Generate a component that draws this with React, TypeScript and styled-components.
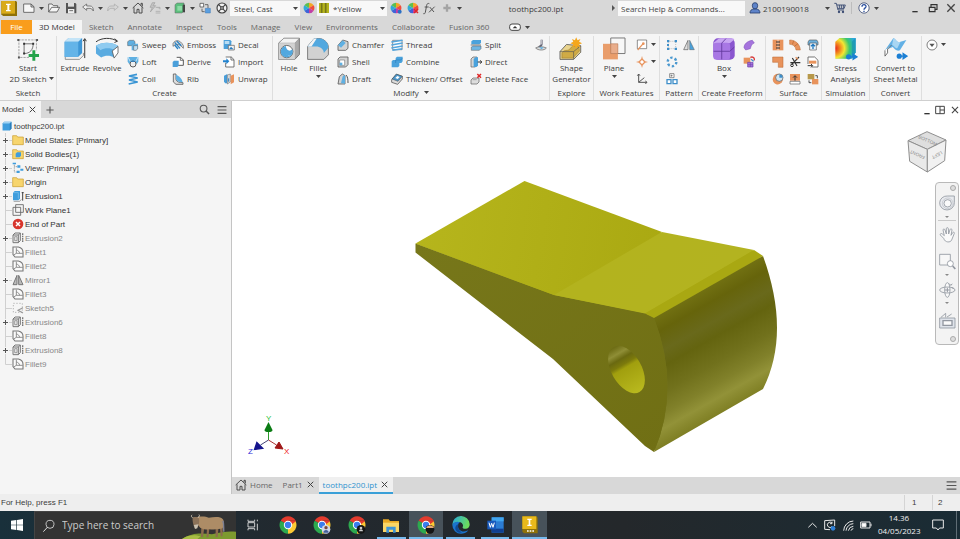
import React from "react";
import styled, { createGlobalStyle, css } from "styled-components";

const UI = `"Open Sans", "Noto Sans", sans-serif`;
const PLAIN = `"Liberation Sans", Arial, sans-serif`;
const BLUE = "#5fb0e2";
const INK = "#5b5b5b";
const ORANGE = "#e8935c";

const Global = createGlobalStyle`
  * { box-sizing: border-box; }
  html, body, #root { height: 100%; margin: 0; }
  body { font: 8px/11px ${UI}; color: #3c3c3c; background: #fff; overflow: hidden; }
  button, input, select { font: inherit; color: inherit; }
  button { background: none; border: 0; padding: 0; margin: 0; white-space: nowrap; }
  svg { display: block; flex: none; }
  ul { list-style: none; margin: 0; padding: 0; }
`;

const Shell = styled.div`
  height: 100vh;
  display: flex;
  flex-direction: column;
`;

/* ---------- icons ---------- */

const small: Record<string, React.ReactNode> = {
  sweep: (<><path d="M2 8l6-4h12l4 4v8h-8v4H2z" fill={BLUE} stroke={INK} strokeWidth="1.5" /><path d="M14 18l6-4h13v13l-6 7H14z" fill={BLUE} /><path d="M20 20h12v10l-5 4h-7z" fill="#bfe0f5" stroke={INK} strokeWidth="1.5" /></>),
  loft: (<><path d="M2 3h32v14l-4 6H6l-4-6z" fill={BLUE} /><path d="M3 3l7 14M33 3l-7 14" stroke="#fff" strokeWidth="2" /><circle cx="18" cy="24" r="9" fill="#eee" stroke={INK} strokeWidth="3" /><path d="M10 18a10 8 0 0 1 16 0z" fill="#2b7dc0" /></>),
  coil: (<path d="M30 4L6 9l26 6L6 21l26 6-27 6" fill="none" stroke="#3a95d4" strokeWidth="5" />),
  emboss: (<><path d="M3 14C8 2 24 0 34 20v8C24 16 14 12 3 22z" fill="#ddd" stroke={INK} strokeWidth="2" /><path d="M8 10l16 18M14 6l14 14M8 18l10 12" stroke="#2b83c4" strokeWidth="4" /></>),
  derive: (<><path d="M14 4h12l8 8v16H18" fill="#fff" stroke={INK} strokeWidth="3" /><path d="M25 4v9h9" fill="none" stroke={INK} strokeWidth="2.5" /><path d="M2 18l4-4h14v15l-4 4H2z" fill="#4a9fda" /></>),
  rib: (<><path d="M4 3h8v16c2 8 10 10 21 10v5H12L4 27z" fill="#ddd" stroke={INK} strokeWidth="2.5" /><path d="M12 6c10 2 18 12 20 22-12 0-18-4-20-10z" fill={BLUE} /></>),
  decal: (<><path d="M2 3h20l3 4v19l-4 4H2z" fill="#4a9fda" /><path d="M5 6h14v9H5z" fill="#b8dcf3" /><path d="M16 19h18v14H16z" fill="#f4f4f4" stroke={INK} strokeWidth="2" /><path d="M18 31l6-8 8 8z" fill="#2b7dc0" /></>),
  import: (<><path d="M8 3h17l8 8v22H8V20" fill="#fff" stroke={INK} strokeWidth="2.5" /><path d="M24 3v9h9" fill="none" stroke={INK} strokeWidth="2.5" /><path d="M0 13h10V7l9 9-9 9v-6H0z" fill="#2484cf" /></>),
  unwrap: (<><path d="M3 8l10-5v28H6l-3-6z" fill="#4a9fda" /><path d="M13 6l9-3v24l-9 6z" fill="#d9d9d9" stroke={INK} strokeWidth="1.5" /><path d="M23 8l10-4v24l-10 6z" fill={ORANGE} /><path d="M17 16v10" stroke="#2b7dc0" strokeWidth="3" /></>),
  chamfer: (<><path d="M3 19L17 3l16 5v20l-7 6H3z" fill="#d3d3d3" stroke={INK} strokeWidth="2.5" /><path d="M3 19L17 4l9 8L12 26z" fill={BLUE} /></>),
  shell: (<><path d="M3 9l6-6h24v23l-7 7H3z" fill="#d3d3d3" stroke={INK} strokeWidth="2.5" /><path d="M8 12h15v16H8z" fill="#fff" stroke={INK} strokeWidth="1.5" /><path d="M8 20h8v8H8z" fill={BLUE} /></>),
  draft: (<><path d="M3 33L7 11l9-8 8 5v25z" fill="#d3d3d3" stroke={INK} strokeWidth="2.5" /><path d="M12 30l5-20 7-4v26z" fill={BLUE} /><path d="M27 6c5 5 6 13 6 24" fill="none" stroke="#333" strokeWidth="2.5" /></>),
  thread: (<><path d="M5 4h28v28H5z" fill="#fff" stroke={INK} strokeWidth="2" /><path d="M1 9l34-5M1 18l34-6M1 27l34-6M4 34l30-5" stroke="#55a6dd" strokeWidth="4.5" /></>),
  combine: (<><path d="M2 16l4-4h8V6l4-4h17v14l-4 5h-6v9l-4 4H2z" fill="#4aa2dc" /><path d="M14 12h16l4-6M14 12v9" stroke="#2475b5" strokeWidth="1.5" fill="none" /></>),
  thicken: (<><path d="M2 20L16 4l18 6v8L20 34 2 28z" fill="#ddd" stroke={INK} strokeWidth="2.5" /><path d="M3 18L16 3l18 7-13 15z" fill="#4c95c8" stroke="#444" strokeWidth="1.5" /><path d="M13 15l6-6 7 3-6 6z" fill="#fff" /></>),
  split: (<><path d="M4 7l5-4h24v9l-5 4H4z" fill="#4aa2dc" /><path d="M2 18h31" stroke="#444" strokeWidth="2" /><path d="M4 24l5-3h24v8l-5 5H4z" fill="#6fb6e3" stroke={INK} strokeWidth="1.5" /></>),
  direct: (<><path d="M3 9l6-6h12v25l-5 5H3z" fill="#d5d5d5" stroke={INK} strokeWidth="2" /><path d="M11 9l5-5h8v25l-5 4h-8z" fill="#4aa2dc" /><path d="M23 18h12M31 13l4 5-4 5" stroke="#333" strokeWidth="3" fill="none" /></>),
  deleteFace: (<><path d="M3 21l6-6h18v12l-6 6H3z" fill="#ddd" stroke={INK} strokeWidth="2" /><path d="M8 20h12" stroke="#888" strokeWidth="2" /><path d="M22 3l11 11M33 3L22 14" stroke="#e02828" strokeWidth="4.5" /></>),
  finish: (<><path d="M20 2v14c0 6-8 5-8 10" fill="none" stroke="#667" strokeWidth="6" /><path d="M20 3v13" stroke="#fff" strokeWidth="2" /><path d="M2 27c6-5 24-5 32 0-6 8-24 8-32 0z" fill="#ddd" stroke={INK} strokeWidth="2" /><path d="M12 25h14l-6 6z" fill={BLUE} /></>),
  axis: (<><path d="M4 3h28v26H4z" fill="#fff" stroke={INK} strokeWidth="2" /><path d="M5 33l17-20" stroke={ORANGE} strokeWidth="3.5" /><circle cx="22" cy="14" r="4" fill={ORANGE} /></>),
  point: (<><path d="M18 2v32M2 18h32" stroke={ORANGE} strokeWidth="2.5" /><path d="M18 9l9 9-9 9-9-9z" fill="#fff" stroke={ORANGE} strokeWidth="4" /></>),
  ucs: (<path d="M8 3v25h25M8 28L25 14M4 8l4-5 4 5M28 24l5 4-5 5" fill="none" stroke="#555" strokeWidth="3" />),
  rect: (<><path d="M7 7h22v22H7z" fill="none" stroke="#888" strokeWidth="1.5" strokeDasharray="3 3" /><path d="M3 3h7v7H3zM26 3h7v7h-7zM3 26h7v7H3zM26 26h7v7h-7zM3 15h6v6H3z" fill="#3f8fc9" /></>),
  mirror: (<><path d="M15 4v28H2z" fill="#ddd" stroke={INK} strokeWidth="2" /><path d="M20 4v28h14z" fill="#4aa2dc" stroke={INK} strokeWidth="1.5" /></>),
  circ: (<circle cx="18" cy="18" r="13" fill="none" stroke="#4a98cf" strokeWidth="7" strokeDasharray="7 6.6" />),
  sketchPat: (<><path d="M11 2h13v12H11zM16 5v6M14 8h6" fill="#fff" stroke={INK} strokeWidth="2" /><path d="M3 20h12v12H3zM21 20h12v12H21z" fill="#fff" stroke="#3f8fc9" strokeWidth="4" /></>),
  face: (<path d="M3 26C3 16 12 6 28 4l6 8c-8 2-10 10-12 17L8 33z" fill="#a574dd" stroke="#7d4fb6" strokeWidth="1.5" />),
  convert: (<><path d="M2 5h20v18H2z" fill={ORANGE} /><path d="M14 19h16v14H14z" fill="#a574dd" stroke="#6a3fa8" strokeWidth="2" /><path d="M22 19v14M14 26h16" stroke="#6a3fa8" strokeWidth="1.5" /><path d="M22 4c8-3 13 2 12 9" fill="none" stroke="#d63c3c" strokeWidth="4" /><path d="M24 10l8 6" stroke="#3f8fc9" strokeWidth="4" /></>),
  stitch: (<><path d="M2 2h32v32H2z" fill={ORANGE} /><path d="M18 2v32" stroke="#fff" strokeWidth="2" /><path d="M12 9h12M12 18h12M12 27h12" stroke="#333" strokeWidth="3" /></>),
  ruled: (<><path d="M2 3c18 0 31 13 32 30H21C20 22 12 16 2 16z" fill={ORANGE} stroke="#b8662f" strokeWidth="1.5" /><path d="M14 5l-4 12M27 14L16 22" stroke="#b8662f" strokeWidth="2" /></>),
  replace: (<><path d="M3 9l4-6h22l4 6v9H3z" fill="#6bb1de" stroke={INK} strokeWidth="2" /><path d="M8 12h20v21H8z" fill="#eaf4fb" stroke={INK} strokeWidth="2" /><path d="M18 30V17M12 22l6-6 6 6" fill="none" stroke="#2178bd" strokeWidth="4" /></>),
  patch: (<path d="M2 3h31v31H19V19H2z" fill={ORANGE} stroke="#b8662f" strokeWidth="1.5" />),
  trim: (<><path d="M30 3L8 26M34 20H4M10 6l14 24" stroke="#333" strokeWidth="3.5" /><circle cx="9" cy="28" r="4" fill="none" stroke="#333" strokeWidth="3" /><path d="M20 4l6 6" stroke={ORANGE} strokeWidth="4" /></>),
  extend: (<><path d="M3 24V3h20l10 10v20H14" fill="#fff" stroke={INK} strokeWidth="2.5" /><path d="M6 14h22v9H6z" fill={ORANGE} /><path d="M2 29h14M12 24l5 5-5 5" stroke="#333" strokeWidth="3" fill="none" /></>),
  sculpt: (<><path d="M3 15A14 14 0 1 0 31 24l-6-8z" fill={ORANGE} /><circle cx="18" cy="17" r="15" fill={ORANGE} /><circle cx="22" cy="14" r="11" fill="#cfe6f5" stroke={INK} strokeWidth="2" /><path d="M22 14V4a10 10 0 0 1 10 10z" fill="#3f8fc9" /></>),
  thickSurf: (<><path d="M3 3h30v20H3z" fill={ORANGE} /><path d="M3 25h30v8H3z" fill="#fff" stroke={INK} strokeWidth="2" /><path d="M18 23V9M12 14l6-6 6 6" stroke="#333" strokeWidth="3" fill="none" /></>),
  copyObj: (<><path d="M2 3h20v16H2z" fill="#b7984a" /><path d="M15 18h19v16H15z" fill={ORANGE} /><path d="M25 8h6v8M6 22v7h7" stroke="#333" strokeWidth="2.5" fill="none" /></>),
  /* quick access */
  newDoc: (<path d="M2 6h22l9 8v17H2zM24 6v9h9" fill="#f7f7f7" stroke="#555" strokeWidth="2.5" />),
  open: (<path d="M2 30V6h10l4 5h13v6M2 30l9-14h24l-8 14z" fill="#f4f4f4" stroke="#555" strokeWidth="2.5" />),
  save: (<><path d="M3 3h28l3 3v28H3z" fill="#555" /><path d="M9 3h18v11H9z" fill="#ddd" /><path d="M9 21h19v13H9z" fill="#eee" /><path d="M13 26h11" stroke="#555" strokeWidth="2.5" /></>),
  undo: (<path d="M2 15L14 6v6h10c7 0 10 5 10 15-3-5-6-8-10-8H14v6z" fill="#f0f0f0" stroke="#666" strokeWidth="2.5" />),
  redo: (<path d="M34 15L22 6v6H12C5 12 2 17 2 27c3-5 6-8 10-8h10v6z" fill="#d6d6d6" stroke="#b0b0b0" strokeWidth="2.5" />),
  home: (<path d="M2 18L18 3l16 15M6 16v17h9V22h6v11h9V16M27 10V4h4v9" fill="none" stroke="#444" strokeWidth="2.8" />),
  bolt: (<path d="M10 2L3 16h7L4 30 20 11h-8l6-9zM20 16h13v6M20 28h14M20 33h14" fill="#c4c4c4" stroke="#a0a0a0" strokeWidth="2" />),
  material: (<><path d="M3 8l6-5h21v24l-6 6H3z" fill="#5cbf7d" stroke="#666" strokeWidth="1.5" /><path d="M10 12h14v14H10z" fill="#8edba6" /><path d="M26 8h7v23h-7z" fill="#444" /></>),
  link: (<><path d="M3 4h11v11H3z" fill="#fff" stroke="#555" strokeWidth="2.5" /><path d="M18 8h9v10M9 20v9h8" fill="none" stroke="#555" strokeWidth="2.5" /><path d="M19 19h15v14H19z" fill="#5a9fe0" stroke="#3d74b0" strokeWidth="1.5" /></>),
  steering: (<><circle cx="18" cy="18" r="15" fill="#f0f0f0" stroke="#444" strokeWidth="3.5" /><path d="M8 8l20 20M28 8L8 28" stroke="#444" strokeWidth="3.5" /><circle cx="18" cy="18" r="5" fill="#888" stroke="#444" strokeWidth="2" /></>),
  wheel: (<><path d="M18 18V2a16 16 0 0 1 14 8z" fill="#f5a623" /><path d="M18 18L32 10a16 16 0 0 1 0 16z" fill="#ef4b3c" /><path d="M18 18l14 8a16 16 0 0 1-14 8z" fill="#c23fa5" /><path d="M18 18v16A16 16 0 0 1 4 26z" fill="#3f63d8" /><path d="M18 18L4 26a16 16 0 0 1 0-16z" fill="#31a9d8" /><path d="M18 18L4 10A16 16 0 0 1 18 2z" fill="#5cbf4d" /></>),
  plus: (<path d="M18 7v22M7 18h22" stroke="#a3a3a3" strokeWidth="7" />),
  user: (<><path d="M10 10a8 8 0 0 1 16 0c0 7-3 11-8 11s-8-4-8-11z" fill="#5e83c9" stroke="#27406f" strokeWidth="2.5" /><path d="M3 33c0-8 5-11 10-12h10c5 1 10 4 10 12z" fill="#5e83c9" stroke="#27406f" strokeWidth="2.5" /></>),
  cart: (<><path d="M1 4h6l5 20h18M9 9h25l-4 11H12M16 9v10M22 9v10M28 9v10" fill="none" stroke="#3b4b72" strokeWidth="2.8" /><circle cx="15" cy="30" r="3.5" fill="#3b4b72" /><circle cx="27" cy="30" r="3.5" fill="#3b4b72" /></>),
  help: (<><circle cx="18" cy="18" r="15.5" fill="#fff" stroke="#3b4b72" strokeWidth="2.5" /><path d="M12 14c0-8 13-8 12 0-1 5-6 4-6 9M18 26v4" fill="none" stroke="#2a4f9e" strokeWidth="4" /></>),
  minimize: (<path d="M10 29h16" stroke="#333" strokeWidth="4" />),
  restore: (<path d="M7 16h17v13H7zM12 15V8h18v14h-6" fill="none" stroke="#333" strokeWidth="3.5" />),
  close: (<path d="M7 7l22 22M29 7L7 29" stroke="#444" strokeWidth="4" />),
  splitWin: (<path d="M5 7h26v22H5zM18 7v22M18 18h13" fill="none" stroke="#444" strokeWidth="3" />),
  add: (<path d="M18 5v26M5 18h26" stroke="#555" strokeWidth="4" />),
  search: (<><circle cx="15" cy="15" r="11" fill="none" stroke="#555" strokeWidth="3.5" /><path d="M23 23l10 10" stroke="#555" strokeWidth="5" /></>),
  menu: (<path d="M2 6h32M2 18h32M2 30h32" stroke="#555" strokeWidth="4" />),
  more: (<><circle cx="18" cy="18" r="15" fill="#fff" stroke="#666" strokeWidth="2.5" /><path d="M10 14h16l-8 10z" fill="#555" /></>),
  pill: (<><rect x="2" y="9" width="32" height="19" rx="7" fill="#fff" stroke="#444" strokeWidth="3" /><path d="M11 22h14l-7-7z" fill="#333" /></>),
  /* browser tree */
  part: (<><path d="M2 9l6-6h26v24l-6 7H2z" fill="#3f9ddd" /><path d="M2 9l6-6h26l-6 6z" fill="#9fd2f2" /><path d="M28 9l6-6v24l-6 7z" fill="#2b7dbb" /></>),
  folder: (<path d="M2 5h12l3 4h17v23H2z" fill="#f7d56d" stroke="#c79a2b" strokeWidth="2" />),
  folderPart: (<><path d="M2 5h12l3 4h17v23H2z" fill="#f7d56d" stroke="#c79a2b" strokeWidth="2" /><path d="M11 17l4-4h12v10l-4 5H11z" fill="#3f9ddd" /></>),
  view: (<><path d="M7 4v26h8M7 14h10" fill="none" stroke="#777" strokeWidth="2" strokeDasharray="3 2" /><path d="M2 2h10v5H2zM16 10h9v7h-9zM14 26h9v7h-9zM25 20h9v6h-9z" fill="#3f9ddd" /></>),
  extrude: (<><path d="M3 8l5-5h16v23l-5 5H3z" fill="#3f9ddd" /><path d="M3 8h16v18" stroke="#9fd2f2" strokeWidth="1.5" fill="none" /><path d="M5 34h18l5-6" stroke="#777" strokeWidth="2" fill="none" /><path d="M32 6v26M29 8h6" stroke="#444" strokeWidth="3" /></>),
  workPlane: (<path d="M11 2h23v23H11zM3 10h23v24H3z" fill="none" stroke="#666" strokeWidth="2.6" />),
  end: (<><circle cx="18" cy="18" r="16" fill="#d7352d" /><path d="M12 12l12 12M24 12L12 24" stroke="#fff" strokeWidth="4.5" /></>),
  extrudeOff: (<><path d="M3 9l6-6h16v23l-6 6H3zM3 9h16v23M19 9l6-6" fill="#eee" stroke="#777" strokeWidth="3" /><path d="M8 14h7v12H8z" fill="none" stroke="#777" strokeWidth="2" /><path d="M32 4v28" stroke="#777" strokeWidth="4" strokeDasharray="5 2" /></>),
  filletOff: (<><path d="M3 3h16c9 2 14 8 14 16v14H9l-6-7z" fill="#fafafa" stroke="#777" strokeWidth="3.2" /><path d="M13 5v17l-8 5M13 22h19M13 12c6 1 9 5 10 10" fill="none" stroke="#777" strokeWidth="2.4" /></>),
  mirrorOff: (<path d="M15 4v28H3zM20 4v28h13z" fill="#bbb" stroke="#777" strokeWidth="3" />),
  sketchOff: (<><path d="M4 4h27v27H4z" fill="none" stroke="#aaa" strokeWidth="2.5" strokeDasharray="4 5" /><path d="M33 17L18 25l15 8" fill="none" stroke="#999" strokeWidth="3.5" /></>),
};

const big: Record<string, React.ReactNode> = {
  sketch: (<><path d="M6 8h58M8 6v60M12 62h28M62 8v32" stroke="#777" strokeWidth="2" strokeDasharray="7 3" /><path d="M3 5h6v6H3zM61 5h6v6h-6zM5 59h6v6H5z" fill="#555" /><path d="M24 20h28c0 18-10 30-28 30z" fill="none" stroke="#555" strokeWidth="2.5" /><path d="M21 17h6v6h-6zM49 17h6v6h-6zM21 47h6v6h-6z" fill="#333" /><path d="M54 40v32M38 56h32" stroke="#23a34a" strokeWidth="9" /></>),
  extrude: (<><path d="M6 58v10h44l12-12v-8" fill="#eee" stroke="#666" strokeWidth="2" /><path d="M4 14L16 2h42v46L46 60H4z" fill="#3f97d6" /><path d="M4 14L16 2h42L46 14z" fill="#c4e4f7" /><path d="M4 14h42v46H4z" fill="#64b4e8" /><path d="M66 64V6M61 12l5-8 5 8" stroke="#333" strokeWidth="3" fill="none" /></>),
  revolve: (<><path d="M2 14C20 0 50 0 68 12M60 4l8 8-9 4" fill="none" stroke="#333" strokeWidth="3" /><path d="M2 26c18-12 48-12 68 0L58 62c-12-7-28-7-40 0L2 50z" fill="#5aabe0" /><path d="M2 26c18-12 48-12 68 0L60 40c-12-8-32-8-44 0z" fill="#8fcbf0" /><path d="M52 42l18-14v20L58 64z" fill="#fff" stroke="#555" strokeWidth="2.5" /></>),
  hole: (<><path d="M4 18L20 3h48v50L54 68H4z" fill="#a9a9a9" stroke="#666" strokeWidth="2.5" /><path d="M4 18L20 3h48L54 18z" fill="#f3f3f3" stroke="#777" strokeWidth="1.5" /><path d="M4 18h50v50H4z" fill="#d2d2d2" /><circle cx="29" cy="44" r="19" fill="#fff" stroke="#555" strokeWidth="2.5" /><path d="M16 31a18 18 0 0 0 26 26C30 58 24 46 16 31z" fill="#52a8df" /><path d="M16 31c2 14 12 26 26 26a18 18 0 0 0 4-20C38 46 28 40 26 27a18 18 0 0 0-10 4z" fill="#52a8df" /></>),
  fillet: (<><path d="M4 28L24 4h20c14 4 24 14 24 28v22L54 68H4z" fill="#d2d2d2" stroke="#666" strokeWidth="2.5" /><path d="M4 28L24 4h20c14 4 24 14 24 28L54 48C54 36 42 28 30 28z" fill="#52a8df" /><path d="M4 28L24 4h8L16 28z" fill="#f3f3f3" /></>),
  shape: (<><path d="M2 44L22 22l44 4v20L44 68H2z" fill="#e9d48f" stroke="#555" strokeWidth="2.5" /><path d="M8 48c10-14 18-2 26-14s14-2 26-8l2 16-20 22H8z" fill="#d0ab45" stroke="#917325" strokeWidth="1.5" /><path d="M2 44h42l22-18M44 44v24" fill="none" stroke="#555" strokeWidth="2" /><path d="M52 0l4 9 9-4-4 9 9 4-9 4 4 9-9-4-4 9-4-9-9 4 4-9-9-4 9-4-4-9 9 4z" fill="#f5a71d" /></>),
  plane: (<><path d="M26 2h44v48H26z" fill="#f7f7f7" stroke="#777" strokeWidth="3" /><path d="M2 20h46v48H2z" fill={ORANGE} fillOpacity=".9" /><path d="M26 20h22v30H26z" fill="#e9ad8b" stroke="#a97352" strokeWidth="1.5" /></>),
  box: (<><rect x="3" y="3" width="66" height="66" rx="14" fill="#8a56cf" /><path d="M4 20q0-4 4-6l10-9q3-2 8-2h32q8 0 10 4L54 18z" fill="#c9a6f2" /><rect x="3" y="17" width="52" height="52" rx="10" fill="#a877e4" /><path d="M29 18v50M4 43h50L68 30M29 18L42 4" stroke="#5e3599" strokeWidth="2.5" fill="none" /></>),
  stress: (<><defs><radialGradient id="fea" cx="0" cy=".5" r="1"><stop offset="0" stopColor="#e5251d" /><stop offset=".25" stopColor="#f38b1e" /><stop offset=".45" stopColor="#f5e632" /><stop offset=".7" stopColor="#3bc86f" /><stop offset="1" stopColor="#2aa6e0" /></radialGradient></defs><path d="M3 14L16 2h50v44L54 66H3z" fill="url(#fea)" /><path d="M54 14L66 2v44L54 66z" fill="#1690a8" opacity=".6" /><circle cx="44" cy="60" r="8" fill="#1b7fd4" /><path d="M44 60h18M58 52l12 8-12 8z" stroke="#1b7fd4" strokeWidth="4" fill="#1b7fd4" /></>),
  sheet: (<><path d="M2 40L28 2c8 4 12 16 22 12L68 8 48 40c-10 4-16-4-22-10z" fill="#62b0e5" /><path d="M28 2c8 4 12 16 22 12L40 34c-8 0-10-8-16-10z" fill="#a8d6f3" /><path d="M2 40v18l8-10V36l12-12" fill="#fff" stroke="#555" strokeWidth="2.5" /><circle cx="46" cy="58" r="8" fill="#1b7fd4" /><path d="M46 58h16M58 50l12 8-12 8z" stroke="#1b7fd4" strokeWidth="4" fill="#1b7fd4" /></>),
};

const Icon = ({ n, s = 12 }: { n: string; s?: number }) => (
  <svg width={s} height={s} viewBox="0 0 36 36" aria-hidden="true">{small[n]}</svg>
);
const BigIcon = ({ n }: { n: string }) => (
  <svg width="24" height="24" viewBox="-1 -1 74 74" aria-hidden="true">{big[n]}</svg>
);
const Caret = () => (
  <svg width="5" height="3" viewBox="0 0 10 6" aria-hidden="true"><path d="M0 0h10L5 6z" fill="#444" /></svg>
);

/* ---------- title bar ---------- */

const TitleBar = styled.header`
  display: flex;
  align-items: center;
  height: 18px;
  padding-bottom: 2px;
  background: #d8d8d8;
`;
const Logo = styled.button`
  width: 20px;
  height: 16px;
  padding-left: 1px;
`;
const Tool = styled.button<{ $narrow?: boolean }>`
  display: flex;
  flex: none;
  align-items: center;
  justify-content: center;
  width: ${(p) => (p.$narrow ? 8 : 17)}px;
  height: 16px;
`;
const Picker = styled.label`
  display: flex;
  flex: none;
  align-items: center;
  gap: 2px;
  width: 70px;
  height: 15px;
  padding: 0 2px;
  background: #f8f8f8;
  select {
    flex: 1;
    min-width: 0;
    padding: 0 0 0 2px;
    border: 0;
    background: none;
    appearance: none;
    outline: 0;
  }
`;
const DocTitle = styled.h1`
  flex: 1;
  margin: 0;
  font: inherit;
  text-align: center;
`;
const HelpSearch = styled.input`
  width: 127px;
  height: 15px;
  margin: 0 1px;
  padding: 0 3px;
  border: 0;
  background: #f8f8f8;
  &::placeholder { color: #444; opacity: 1; }
`;
const Account = styled.button`
  width: 60px;
  text-align: left;
`;
const Rule = styled.i`
  width: 1px;
  height: 12px;
  margin: 0 3px;
  background: #bdbdbd;
`;
const WindowTools = styled.div`
  display: flex;
  margin-left: 26px;
`;
const WinButton = styled.button`
  display: grid;
  place-items: center;
  width: 18px;
  height: 16px;
`;

const Pic = ({ n, label }: { n: string; label: string }) => (
  <Tool aria-label={label}><Icon n={n} /></Tool>
);
const Drop = ({ label }: { label: string }) => (
  <Tool $narrow aria-label={label}><Caret /></Tool>
);

const Title = () => (
  <TitleBar>
    <Logo aria-label="Application menu">
      <svg width="16" height="16" viewBox="0 0 48 48">
        <path d="M1 3h44l3 3v42H6l-5-5z" fill="#8f7209" />
        <path d="M1 3h41v38H1z" fill="#d9aa18" />
        <path d="M15 11h14v4h-4v15h4v4H15v-4h4V15h-4z" fill="#fff" />
      </svg>
    </Logo>
    <Pic n="newDoc" label="New" /><Drop label="New options" />
    <Pic n="open" label="Open" /><Pic n="save" label="Save" />
    <Pic n="undo" label="Undo" /><Drop label="Undo list" />
    <Pic n="redo" label="Redo" /><Drop label="Redo list" />
    <Pic n="home" label="Home" /><Pic n="bolt" label="Update" /><Drop label="Update options" />
    <Pic n="material" label="Select" /><Drop label="Select options" />
    <Pic n="link" label="Relationships" /><Pic n="steering" label="Material browser" />
    <Picker>
      <select aria-label="Material" defaultValue="Steel, Cast"><option>Steel, Cast</option></select>
      <Caret />
    </Picker>
    <Pic n="wheel" label="Appearance browser" />
    <Picker>
      <svg width="10" height="10" viewBox="0 0 30 30"><path d="M0 0h30v30H0z" fill="#b5b51d" /><path d="M8 0v30M20 0v30" stroke="#77771a" strokeWidth="5" /></svg>
      <select aria-label="Appearance" defaultValue="*Yellow"><option>*Yellow</option></select>
      <Caret />
    </Picker>
    <Tool aria-label="Adjust appearance">
      <svg width="12" height="12" viewBox="0 0 36 36">{small.wheel}<circle cx="29" cy="29" r="6" fill="#2b6fc4" /></svg>
    </Tool>
    <Tool aria-label="Clear appearance">
      <svg width="12" height="12" viewBox="0 0 36 36">{small.wheel}<path d="M21 21l12 12M33 21L21 33" stroke="#e02828" strokeWidth="4.5" /></svg>
    </Tool>
    <Tool aria-label="Parameters">
      <svg width="13" height="13" viewBox="0 0 39 39"><path d="M19 5c-7-3-8 4-9 10L7 31c-1 4-3 5-6 4M5 15h12M20 15l13 15M35 14L18 31" fill="none" stroke="#555" strokeWidth="3" /></svg>
    </Tool>
    <Pic n="plus" label="Add command" /><Drop label="Customize" />
    <DocTitle>toothpc200.ipt</DocTitle>
    <Tool $narrow aria-label="Expand search">
      <svg width="3" height="6" viewBox="0 0 6 12"><path d="M0 0v12l6-6z" fill="#555" /></svg>
    </Tool>
    <HelpSearch aria-label="Search Help and Commands" placeholder="Search Help & Commands..." />
    <Pic n="user" label="Account" />
    <Account>2100190018</Account>
    <Drop label="Account options" />
    <Pic n="cart" label="App store" />
    <Rule />
    <Pic n="help" label="Help" /><Drop label="Help options" />
    <WindowTools>
      <WinButton aria-label="Minimize"><Icon n="minimize" /></WinButton>
      <WinButton aria-label="Restore"><Icon n="restore" /></WinButton>
      <WinButton aria-label="Close"><Icon n="close" /></WinButton>
    </WindowTools>
  </TitleBar>
);

/* ---------- ribbon ---------- */

const Tabs = styled.nav`
  display: flex;
  align-items: stretch;
  height: 16px;
  padding: 2px 0 0 1px;
  background: #d8d8d8;
  color: #666;
`;
const Tab = styled.button<{ $kind?: "file" | "active" }>`
  padding: 0 7px 2px;
  ${(p) => p.$kind === "file" && css`width: 31px; background: #f99d1c; color: #fff;`}
  ${(p) => p.$kind === "active" && css`background: #f5f5f5; color: #333;`}
`;
const TabTools = styled.div`
  display: flex;
  align-items: center;
  gap: 4px;
  margin-left: 13px;
`;
const Ribbon = styled.div`
  display: flex;
  height: 67px;
  padding-top: 2px;
  background: #f5f5f5;
  border-bottom: 1px solid #cfcfcf;
`;
const Panel = styled.section<{ $w: number }>`
  display: flex;
  flex: none;
  flex-direction: column;
  width: ${(p) => p.$w}px;
  border-right: 1px solid #dedede;
`;
const PanelBody = styled.div<{ $center?: boolean }>`
  display: flex;
  height: 51px;
  padding-left: ${(p) => (p.$center ? 0 : 2)}px;
  justify-content: ${(p) => (p.$center ? "center" : "flex-start")};
`;
const PanelTitle = styled.h2`
  display: flex;
  align-items: center;
  justify-content: center;
  gap: 5px;
  margin: 0;
  font: inherit;
  white-space: nowrap;
`;
const Large = styled.button<{ $w?: number }>`
  display: flex;
  flex-direction: column;
  align-items: center;
  width: ${(p) => (p.$w ? `${p.$w}px` : "auto")};
  padding-top: 1px;
  span { margin-top: 1px; }
  span + svg { margin-top: 2px; }
`;
const Column = styled.div<{ $w: number }>`
  width: ${(p) => p.$w}px;
  padding-left: 4px;
`;
const Small = styled.button`
  display: flex;
  align-items: center;
  gap: 3px;
  height: 17px;
`;
const Second = styled.b`
  display: flex;
  align-items: center;
  gap: 2px;
  padding-left: 7px;
  font-weight: 400;
`;

const Big = ({ n, text, w, drop }: { n: string; text: string; w?: number; drop?: boolean }) => (
  <Large $w={w}>
    <BigIcon n={n} />
    <span>{text.split("\n").map((t) => <React.Fragment key={t}>{t}<br /></React.Fragment>)}</span>
    {drop && <Caret />}
  </Large>
);
const Stack = ({ w, items }: { w: number; items: string[][] }) => (
  <Column $w={w}>
    {items.map(([n, t, drop]) => (
      <Small key={n} aria-label={t || n}>
        <Icon n={n} />{t}{drop && <Caret />}
      </Small>
    ))}
  </Column>
);

const RibbonBar = () => (
  <>
    <Tabs>
      <Tab $kind="file">File</Tab>
      <Tab $kind="active">3D Model</Tab>
      {["Sketch", "Annotate", "Inspect", "Tools", "Manage", "View", "Environments", "Collaborate", "Fusion 360"].map((t) => (
        <Tab key={t}>{t}</Tab>
      ))}
      <TabTools>
        <Icon n="pill" /><Caret />
      </TabTools>
    </Tabs>
    <Ribbon>
      <Panel $w={57}>
        <PanelBody $center>
          <Large>
            <BigIcon n="sketch" />
            <span>Start</span>
            <Second>2D Sketch<Caret /></Second>
          </Large>
        </PanelBody>
        <PanelTitle>Sketch</PanelTitle>
      </Panel>
      <Panel $w={216}>
        <PanelBody>
          <Big n="extrude" text="Extrude" w={32} />
          <Big n="revolve" text="Revolve" w={32} />
          <Stack w={45} items={[["sweep", "Sweep"], ["loft", "Loft"], ["coil", "Coil"]]} />
          <Stack w={51} items={[["emboss", "Emboss"], ["derive", "Derive"], ["rib", "Rib"]]} />
          <Stack w={50} items={[["decal", "Decal"], ["import", "Import"], ["unwrap", "Unwrap"]]} />
        </PanelBody>
        <PanelTitle>Create</PanelTitle>
      </Panel>
      <Panel $w={277}>
        <PanelBody>
          <Big n="hole" text="Hole" w={28} />
          <Big n="fillet" text="Fillet" w={30} drop />
          <Stack w={54} items={[["chamfer", "Chamfer"], ["shell", "Shell"], ["draft", "Draft"]]} />
          <Stack w={79} items={[["thread", "Thread"], ["combine", "Combine"], ["thicken", "Thicken/ Offset"]]} />
          <Stack w={65} items={[["split", "Split"], ["direct", "Direct"], ["deleteFace", "Delete Face"]]} />
          <Stack w={16} items={[["finish", ""]]} />
        </PanelBody>
        <PanelTitle>Modify<Caret /></PanelTitle>
      </Panel>
      <Panel $w={44}>
        <PanelBody $center><Big n="shape" text={"Shape\nGenerator"} /></PanelBody>
        <PanelTitle>Explore</PanelTitle>
      </Panel>
      <Panel $w={66}>
        <PanelBody>
          <Big n="plane" text="Plane" w={36} drop />
          <Stack w={24} items={[["axis", "", "y"], ["point", "", "y"], ["ucs", ""]]} />
        </PanelBody>
        <PanelTitle>Work Features</PanelTitle>
      </Panel>
      <Panel $w={39}>
        <PanelBody>
          <Stack w={17} items={[["rect", ""], ["circ", ""], ["sketchPat", ""]]} />
          <Stack w={17} items={[["mirror", ""]]} />
        </PanelBody>
        <PanelTitle>Pattern</PanelTitle>
      </Panel>
      <Panel $w={67}>
        <PanelBody $center>
          <Big n="box" text="Box" w={30} drop />
          <Stack w={16} items={[["face", ""], ["convert", ""]]} />
        </PanelBody>
        <PanelTitle>Create Freeform</PanelTitle>
      </Panel>
      <Panel $w={56}>
        <PanelBody>
          <Stack w={17} items={[["stitch", ""], ["patch", ""], ["sculpt", ""]]} />
          <Stack w={18} items={[["ruled", ""], ["trim", ""], ["thickSurf", ""]]} />
          <Stack w={16} items={[["replace", ""], ["extend", ""], ["copyObj", ""]]} />
        </PanelBody>
        <PanelTitle>Surface</PanelTitle>
      </Panel>
      <Panel $w={48}>
        <PanelBody $center><Big n="stress" text={"Stress\nAnalysis"} /></PanelBody>
        <PanelTitle>Simulation</PanelTitle>
      </Panel>
      <Panel $w={52}>
        <PanelBody $center><Big n="sheet" text={"Convert to\nSheet Metal"} /></PanelBody>
        <PanelTitle>Convert</PanelTitle>
      </Panel>
      <Stack w={30} items={[["more", "", "y"]]} />
    </Ribbon>
  </>
);

/* ---------- model browser ---------- */

const Work = styled.div`
  display: flex;
  flex: 1;
  min-height: 0;
`;
const Browser = styled.aside`
  flex: 0 0 232px;
  background: #f5f5f5;
  border-right: 1px solid #c4c4c4;
  font-family: ${PLAIN};
`;
const BrowserTabs = styled.div`
  display: flex;
  align-items: center;
  height: 17px;
  background: #d8d8d8;
`;
const BrowserTab = styled.div`
  display: flex;
  align-items: center;
  align-self: stretch;
  gap: 4px;
  padding: 0 4px 0 2px;
  background: #f5f5f5;
`;
const Bare = styled.button<{ $push?: boolean }>`
  display: grid;
  place-items: center;
  width: 18px;
  height: 16px;
  margin-left: ${(p) => (p.$push ? "auto" : 0)};
`;
const Slim = styled.button`
  display: grid;
  place-items: center;
  width: 9px;
  height: 12px;
`;
const Tree = styled.ul`
  padding-top: 1px;
`;
const Node = styled.li<{ $dim?: boolean }>`
  display: grid;
  grid-template-columns: 12px 13px 1fr;
  align-items: center;
  height: 14px;
  color: ${(p) => (p.$dim ? "#888" : "#333")};
  white-space: nowrap;
`;
const Root = styled.div`
  display: flex;
  align-items: center;
  gap: 2px;
  height: 14px;
  padding-left: 2px;
`;

const nodes: [string, string, boolean, boolean][] = [
  ["folder", "Model States: [Primary]", true, false],
  ["folderPart", "Solid Bodies(1)", true, false],
  ["view", "View: [Primary]", true, false],
  ["folder", "Origin", true, false],
  ["extrude", "Extrusion1", true, false],
  ["workPlane", "Work Plane1", false, false],
  ["end", "End of Part", false, false],
  ["extrudeOff", "Extrusion2", true, true],
  ["filletOff", "Fillet1", false, true],
  ["filletOff", "Fillet2", false, true],
  ["mirrorOff", "Mirror1", true, true],
  ["filletOff", "Fillet3", false, true],
  ["sketchOff", "Sketch5", false, true],
  ["extrudeOff", "Extrusion6", true, true],
  ["filletOff", "Fillet8", false, true],
  ["extrudeOff", "Extrusion8", true, true],
  ["filletOff", "Fillet9", false, true],
];

const Branch = ({ plus, last }: { plus: boolean; last: boolean }) => (
  <svg width="12" height="14" viewBox="0 0 12 14" aria-hidden="true">
    <path d={last ? "M5.5 0v7.5H12" : "M5.5 0v14M5.5 7.5H12"} fill="none" stroke="#d0d0d0" />
    {plus && <path d="M2 4h7v7H2z" fill="#f5f5f5" />}
    {plus && <path d="M5.5 5v5M3 7.5h5" stroke="#555" strokeWidth="1" />}
  </svg>
);

const ModelBrowser = () => (
  <Browser>
    <BrowserTabs>
      <BrowserTab>
        Model
        <Slim aria-label="Close panel"><Icon n="close" s={9} /></Slim>
      </BrowserTab>
      <Bare aria-label="Add panel"><Icon n="add" s={10} /></Bare>
      <Bare $push aria-label="Find"><Icon n="search" s={11} /></Bare>
      <Bare aria-label="Browser menu"><Icon n="menu" s={10} /></Bare>
    </BrowserTabs>
    <Tree>
      <li><Root><Icon n="part" s={10} />toothpc200.ipt</Root></li>
      {nodes.map(([icon, text, plus, dim], i) => (
        <Node key={text} $dim={dim}>
          {plus ? (
            <button aria-label={`Expand ${text}`}><Branch plus last={false} /></button>
          ) : (
            <Branch plus={false} last={i === nodes.length - 1} />
          )}
          <Icon n={icon} />
          {text}
        </Node>
      ))}
    </Tree>
  </Browser>
);

/* ---------- viewport ---------- */

const Main = styled.main`
  display: flex;
  flex: 1;
  flex-direction: column;
  min-width: 0;
`;
const Viewport = styled.div`
  position: relative;
  flex: 1;
  min-height: 0;
  background: #fff;
`;
const Scene = styled.svg`
  width: 100%;
  height: 100%;
`;
const ViewControls = styled.div`
  position: absolute;
  top: 1px;
  right: 1px;
  display: flex;
  align-items: center;
  gap: 1px;
`;
const Cube = styled.svg`
  position: absolute;
  top: 29px;
  right: 13px;
`;
const Triad = styled.svg`
  position: absolute;
  left: 14px;
  bottom: 20px;
`;
const NavBar = styled.div`
  position: absolute;
  top: 81px;
  right: 1px;
  display: flex;
  flex-direction: column;
  align-items: center;
  width: 24px;
  height: 163px;
  padding: 1px;
  border: 1px solid #b9b9b9;
  border-radius: 4px;
  background: #f3f3f3;
`;
const NavDot = styled.button`
  align-self: flex-end;
  width: 6px;
  height: 6px;
  margin: 1px;
  border: 1px solid #aaa;
  border-radius: 50%;
  background: #ddd;
`;
const NavTool = styled.button`
  display: flex;
  flex: 1;
  flex-direction: column;
  align-items: center;
  justify-content: center;
  gap: 4px;
`;
const NavRule = styled.i`
  width: 18px;
  height: 1px;
  background: #c9c9c9;
`;
const TinyCaret = () => (
  <svg width="4" height="2" viewBox="0 0 8 4"><path d="M0 0h8L4 4z" fill="#888" /></svg>
);
const Nav = ({ label, drop, children }: { label: string; drop?: boolean; children: React.ReactNode }) => (
  <NavTool aria-label={label}>
    <svg width="17" height="17" viewBox="0 0 51 51" fill="none" stroke="#9297a0" strokeWidth="2.5">{children}</svg>
    {drop && <TinyCaret />}
  </NavTool>
);

const Part = () => (
  <Scene viewBox="232 101 728 376" role="img" aria-label="Bucket tooth model">
    <defs>
      <linearGradient id="upper" gradientUnits="userSpaceOnUse" x1="420" y1="220" x2="660" y2="260">
        <stop offset="0" stopColor="#b6b51c" /><stop offset="1" stopColor="#aaa912" />
      </linearGradient>
      <linearGradient id="slope" gradientUnits="userSpaceOnUse" x1="600" y1="270" x2="690" y2="320">
        <stop offset="0" stopColor="#b3b31e" /><stop offset="1" stopColor="#b3b320" />
      </linearGradient>
      <linearGradient id="heel" gradientUnits="userSpaceOnUse" x1="654" y1="318" x2="711" y2="419">
        <stop offset="0" stopColor="#717012" /><stop offset=".12" stopColor="#66640b" />
        <stop offset=".28" stopColor="#69691b" /><stop offset=".4" stopColor="#64640f" />
        <stop offset=".6" stopColor="#71711c" /><stop offset=".76" stopColor="#81812a" />
        <stop offset=".87" stopColor="#929238" /><stop offset=".95" stopColor="#86862b" />
        <stop offset="1" stopColor="#7f7f24" />
      </linearGradient>
      <linearGradient id="side" x1="0" y1="0" x2="1" y2="1">
        <stop offset="0" stopColor="#77771a" /><stop offset="1" stopColor="#706f14" />
      </linearGradient>
      <linearGradient id="bore" gradientUnits="userSpaceOnUse" x1="614" y1="348" x2="639" y2="391" gradientTransform="rotate(-60 626.5 369.5)">
        <stop offset="0" stopColor="#6f6e16" /><stop offset=".14" stopColor="#8f8e36" />
        <stop offset=".26" stopColor="#6a6910" /><stop offset=".38" stopColor="#7c7a0c" />
        <stop offset=".46" stopColor="#a19f0e" /><stop offset="1" stopColor="#b8b81e" />
      </linearGradient>
    </defs>
    <path d="M416 244L524.5 182L662 233L754 251L762 256L654 318L645 314L554 296z" fill="#adac17" />
    <path d="M640 320L750 260L762 257V380L654 450z" fill="#71711c" />
    <path d="M654 318L763 256Q791 333 763 389L654 452Q681 388 654 318z" fill="url(#heel)" />
    <path d="M415.5 243.5L554 295L645 313L654 318Q681 388 654 452L645 446L553 359L415.5 252.5z" fill="url(#side)" />
    <path d="M524.5 181L662 232L554 295L415.5 243.5z" fill="url(#upper)" />
    <path d="M662 232L754 250L645 313.5L554 295z" fill="url(#slope)" />
    <path d="M754 250L763 256L654 318L645 313.5z" fill="#a9a812" />
    <ellipse cx="626.5" cy="369.5" rx="26" ry="15" transform="rotate(60 626.5 369.5)" fill="url(#bore)" />
  </Scene>
);

const DocTabs = styled.div`
  display: flex;
  align-items: stretch;
  height: 17px;
  padding-left: 3px;
  background: #d8d8d8;
  color: #666;
`;
const DocTab = styled.div<{ $on?: boolean }>`
  display: flex;
  align-items: center;
  gap: 3px;
  padding: 0 4px;
  color: ${(p) => (p.$on ? "#2f92cf" : "inherit")};
  background: ${(p) => (p.$on ? "#f0f0f0" : "transparent")};
  border-bottom: 2px solid ${(p) => (p.$on ? "#3aa0d8" : "transparent")};
  &:first-child { padding: 0 6px 0 0; }
`;
const Status = styled.footer`
  display: flex;
  align-items: center;
  height: 17px;
  padding-left: 1px;
  background: #eee;
  font-family: ${PLAIN};
`;
const Count = styled.span<{ $first?: boolean }>`
  width: 28px;
  padding-left: ${(p) => (p.$first ? 7 : 5)}px;
  margin-left: ${(p) => (p.$first ? "auto" : 0)};
  border-left: 1px solid #d4d4d4;
  line-height: 15px;
`;

const Stage = () => (
  <Main>
    <Viewport>
      <Part />
      <ViewControls>
        <Slim aria-label="Minimize view"><Icon n="minimize" s={12} /></Slim>
        <Bare aria-label="Tile views"><Icon n="splitWin" s={12} /></Bare>
        <Slim aria-label="Close view"><Icon n="close" s={10} /></Slim>
      </ViewControls>
      <Cube width="40" height="44" viewBox="0 0 120 132" aria-label="View cube">
        <g stroke="#8f8f8f" strokeWidth="3" strokeLinejoin="round">
          <path d="M60 5L117 30 61 58 3 32z" fill="#dedede" />
          <path d="M3 32l58 26v68L8 94z" fill="#e9e9e9" />
          <path d="M117 30L61 58v68l52-34z" fill="#f1f1f1" />
        </g>
        <g fill="#8a8a8a" fontSize="14" fontFamily="Liberation Sans" textAnchor="middle">
          <text transform="translate(60 36) rotate(24)">BOTTOM</text>
          <text transform="translate(33 69) rotate(204)">FRONT</text>
          <text transform="translate(88 71) rotate(152)">LEFT</text>
        </g>
      </Cube>
      <NavBar>
        <NavDot aria-label="Close navigation bar" />
        <Nav label="Full navigation wheel" drop>
          <path d="M26 3h20v20A22 21 0 1 1 26 3z" fill="#e8eaee" /><circle cx="26" cy="25" r="11" fill="#fafafa" /><circle cx="26" cy="25" r="16" strokeWidth="1" />
        </Nav>
        <NavRule />
        <Nav label="Pan">
          <path d="M14 34L4 24c-2-4 3-6 6-3l6 5L12 9c0-4 5-4 6 0l4 12V5c0-4 6-4 6 0l1 16 4-13c1-4 6-3 6 1l-3 16 5-8c3-3 6-1 5 2l-8 20c-3 8-20 9-24-5z" fill="#fafafa" />
        </Nav>
        <Nav label="Zoom" drop>
          <path d="M2 4h32v32H2z" fill="#f7f7f7" /><circle cx="34" cy="32" r="9" fill="#fff" /><path d="M41 39l8 9" strokeWidth="5" />
        </Nav>
        <Nav label="Orbit" drop>
          <ellipse cx="25" cy="27" rx="8" ry="22" fill="#fafafa" /><ellipse cx="25" cy="27" rx="23" ry="9" /><path d="M25 20v14M18 27h14M31 8l4 5 5-4M38 20l6 2" strokeWidth="3" />
        </Nav>
        <Nav label="Look at">
          <path d="M2 18h46v30H2z" fill="#dfe3ea" /><path d="M12 26h27v14H12z" fill="#fafafa" strokeWidth="4" /><path d="M6 16L20 4v12M24 15l14-9" />
        </Nav>
        <NavDot aria-label="Navigation bar options" />
      </NavBar>
      <Triad width="46" height="46" viewBox="0 0 46 46" aria-label="Axis indicator">
        <path d="M22.5 29V18" stroke="#2d9c2d" />
        <path d="M22.5 29l8 5" stroke="#a33" />
        <path d="M22.5 29l-8 5" stroke="#447" />
        <path d="M22.500 11l4 8a4 2 0 0 1-8 0z" fill="#0b7c14" />
        <path d="M37 38l-8-1 4-6z" fill="#a01818" stroke="#a01818" />
        <path d="M9 38l2-6 5 5z" fill="#14148c" stroke="#14148c" strokeWidth="2" />
        <g fontFamily="Liberation Sans" fontSize="8">
          <text x="20" y="10" fill="#2bbf3a">Y</text>
          <text x="38" y="43" fill="#e22">X</text>
          <text x="2" y="43" fill="#2a2ad8">Z</text>
        </g>
      </Triad>
    </Viewport>
    <DocTabs>
      <DocTab><Icon n="home" />Home</DocTab>
      <DocTab>Part1 <Slim aria-label="Close Part1"><Icon n="close" s={9} /></Slim></DocTab>
      <DocTab $on>toothpc200.ipt<Slim aria-label="Close toothpc200.ipt"><Icon n="close" s={9} /></Slim></DocTab>
      <Bare $push aria-label="Document list"><Icon n="menu" s={11} /></Bare>
    </DocTabs>
  </Main>
);

/* ---------- taskbar ---------- */

const Taskbar = styled.footer`
  display: flex;
  height: 28px;
  background: linear-gradient(90deg, #19303b, #22292f 30%, #24282b 65%, #1a2c35);
  color: #f1f1f1;
`;
const Start = styled.button`
  display: grid;
  place-items: center;
  width: 34px;
`;
const TaskSearch = styled.label`
  display: flex;
  align-items: center;
  gap: 4px;
  width: 202px;
  padding-left: 7px;
  background: #333;
  border: 1px solid #444;
  border-width: 1px 0 0 1px;
  font-size: 10px;
  input {
    flex: 1;
    min-width: 0;
    border: 0;
    background: none;
    outline: 0;
  }
  input::placeholder { color: #ccc; opacity: 1; }
`;
const Apps = styled.div`
  display: grid;
  grid-template-columns: repeat(9, 1fr);
  width: 311px;
`;
const AppButton = styled.button<{ $open?: boolean; $active?: boolean }>`
  display: grid;
  place-items: center;
  margin: 0 ${(p) => (p.$active ? 0 : 3)}px;
  background: ${(p) => (p.$active ? "#47525a" : "none")};
  border: solid ${(p) => (p.$open ? "#76b9ed" : "transparent")};
  border-width: 0 0 2px;
  padding-top: 2px;
`;
const Tray = styled.div`
  display: flex;
  align-items: center;
  gap: 6px;
  margin-left: auto;
  padding-right: 3px;
  svg { fill: none; stroke: #e8e8e8; stroke-width: 3; }
`;
const TrayButton = styled.button`
  display: grid;
  place-items: center;
  width: 12px;
  height: 28px;
`;
const Clock = styled.time`
  width: 42px;
  line-height: 13px;
  text-align: center;
  padding-bottom: 2px;
`;
const Notify = styled(TrayButton)`
  width: 24px;
`;
const Edge = styled.i`
  align-self: stretch;
  width: 1px;
  background: #5f6d75;
`;

const Chrome = ({ badge }: { badge?: "person" | "dark" | "sunset" }) => (
  <svg width="18" height="18" viewBox="0 0 54 54">
    <path d="M27 27L5 14A26 26 0 0 1 50 14H27z" fill="#e33b2e" />
    <path d="M27 27l22-13a26 26 0 0 1-22 39z" fill="#fcc934" />
    <path d="M27 27v26A26 26 0 0 1 5 14z" fill="#2da94f" />
    <path d="M15 14h35l1 2-12 9z" fill="#e33b2e" />
    <circle cx="27" cy="27" r="12.5" fill="#fff" /><circle cx="27" cy="27" r="9.5" fill="#3b7ded" />
    {badge && <circle cx="39" cy="40" r="13" fill={badge === "person" ? "#cfd8ec" : "#151515"} />}
    {badge === "person" && <><circle cx="39" cy="35" r="5" fill="#7a4a3c" /><path d="M31 50c0-11 16-11 16 0z" fill="#44609a" /></>}
    {badge === "dark" && <><circle cx="39" cy="36" r="4" fill="#ccc" /><path d="M33 46c0-8 12-8 12 0z" fill="#ccc" /></>}
    {badge === "sunset" && <path d="M27 36a13 13 0 0 1 24 0z" fill="#e8a878" />}
  </svg>
);

const TaskbarRow = () => (
  <Taskbar>
    <Start aria-label="Start">
      <svg width="12" height="12" viewBox="0 0 36 36"><path d="M0 5l16-2v14H0zM18 3l18-3v17H18zM0 19h16v14L0 31zM18 19h18v17l-18-3z" fill="#fff" /></svg>
    </Start>
    <TaskSearch>
      <svg width="14" height="14" viewBox="0 0 42 42"><circle cx="24" cy="16" r="12" fill="none" stroke="#ddd" strokeWidth="2.5" /><path d="M16 25L4 38" stroke="#ddd" strokeWidth="3" /></svg>
      <input aria-label="Search" placeholder="Type here to search" />
      <svg width="54" height="27" viewBox="0 0 162 81">
        <path d="M0 81c30-20 60-18 90-14 30-8 50-10 72-8v22z" fill="#7d9a2f" />
        <path d="M0 81c24-16 40-12 56-8l-10 8z" fill="#a9bd45" />
        <g transform="translate(8 6) scale(.86)">
          <path d="M58 44l-1 36h7l4-29M78 48l-2 33h7l3-31M108 46v34h7l3-32M122 40l4 38h6l1-34" fill="#8d6d4d" />
          <path d="M36 14c18-8 36-6 48-1 20-3 42-5 50 6 5 10 4 22-2 31-12 3-28 6-48 3-14 2-28 0-34-10-6-6-12-18-14-29z" fill="#ad8c66" />
          <path d="M28 12c6-2 16-2 22 4 2 12 0 24-8 34l-8-2c-4-12-8-26-6-36z" fill="#8b7259" />
          <path d="M32 38l4 14 8-2 4-14z" fill="#c9c1b1" />
          <path d="M28 13c-5-2-6-7-2-10M46 12c6-2 7-7 4-10" fill="none" stroke="#d8cfc0" strokeWidth="3" />
          <path d="M133 24c6 12 1 26 4 38" fill="none" stroke="#7d7f92" strokeWidth="5" />
        </g>
      </svg>
    </TaskSearch>
    <Apps>
      <AppButton aria-label="Task view">
        <svg width="12" height="12" viewBox="0 0 36 36" fill="none" stroke="#eee" strokeWidth="2.5"><path d="M3 11h20v13H3zM3 2v5h20V2M3 34v-5h20v5M31 2v5M31 14v20" /></svg>
      </AppButton>
      <AppButton aria-label="Chrome"><Chrome /></AppButton>
      <AppButton aria-label="Chrome, profile 2"><Chrome badge="person" /></AppButton>
      <AppButton aria-label="Chrome, profile 3"><Chrome badge="dark" /></AppButton>
      <AppButton $open aria-label="File Explorer">
        <svg width="16" height="15" viewBox="0 0 48 45"><path d="M0 4h17l4 5h27v32H0z" fill="#e9a824" /><path d="M0 14h48v28H0z" fill="#fbd667" /><path d="M10 26h28v18h-8v-9H18v9h-8z" fill="#3f95d8" /></svg>
      </AppButton>
      <AppButton $open $active aria-label="Chrome, profile 4"><Chrome badge="sunset" /></AppButton>
      <AppButton $open aria-label="Edge">
        <svg width="18" height="18" viewBox="0 0 54 54">
          <defs><linearGradient id="wave" x1="0" y1="0" x2="1" y2=".3"><stop offset="0" stopColor="#24a7e0" /><stop offset="1" stopColor="#6bdc5c" /></linearGradient></defs>
          <path d="M1 27A26 26 0 0 1 53 25c0 12-9 15-18 13-5-2-3-4-2-8 1-7-6-13-14-12C9 19 3 23 1 27z" fill="url(#wave)" />
          <path d="M1 27c4-10 16-12 24-8-8 2-9 12-5 19 5 9 18 11 29 5-6 8-14 10-22 10A26 26 0 0 1 1 27z" fill="#1b74cc" />
          <path d="M20 25c-4 8 0 20 10 24-9 4-18-2-20-10-1-7 3-13 10-14z" fill="#0f4a94" />
        </svg>
      </AppButton>
      <AppButton $open aria-label="Word">
        <svg width="17" height="16" viewBox="0 0 51 48">
          <path d="M14 1h36v46H14z" fill="#2b7cd3" /><path d="M14 1h36v12H14z" fill="#41a5ee" /><path d="M14 35h36v12H14z" fill="#103f91" />
          <path d="M1 11h26v26H1z" fill="#185abd" /><path d="M6 17l4 14 4-12 4 12 4-14" fill="none" stroke="#fff" strokeWidth="3" />
        </svg>
      </AppButton>
      <AppButton $open $active aria-label="Inventor">
        <svg width="16" height="18" viewBox="0 0 48 54">
          <path d="M1 1h42l4 4v47H6l-5-5z" fill="#8f7209" /><path d="M1 1h42v38H1z" fill="#e8b91c" />
          <path d="M16 8h13v4h-4v14h4v4H16v-4h4V12h-4z" fill="#fff" /><path d="M15 45h5M23 45h5M31 45h5" stroke="#fff" strokeWidth="5" />
        </svg>
      </AppButton>
    </Apps>
    <Tray>
      <TrayButton aria-label="Show hidden icons"><svg width="9" height="9" viewBox="0 0 27 27"><path d="M1 19L13.5 7 26 19" /></svg></TrayButton>
      <TrayButton aria-label="Sync">
        <svg width="12" height="12" viewBox="0 0 36 36"><path d="M2 5l30-2v18M2 5v26l16 1M24 12a8 8 0 1 0 0 11M24 8v6h-6" /><circle cx="27" cy="28" r="7" fill="#2f7fd6" stroke="none" /></svg>
      </TrayButton>
      <TrayButton aria-label="Network"><svg width="11" height="11" viewBox="0 0 33 33"><path d="M2 32A30 30 0 0 1 31 3M9 32A23 23 0 0 1 31 11M16 32A16 16 0 0 1 31 19M24 32a8 8 0 0 1 7-6" /></svg></TrayButton>
      <TrayButton aria-label="Battery"><svg width="12" height="8" viewBox="0 0 36 24"><path d="M2 3h28v18H2zM33 8v8" /><path d="M6 7h12v10H6z" fill="#fff" /></svg></TrayButton>
      <Clock>14.36<br />04/05/2023</Clock>
      <Notify aria-label="Notifications"><svg width="12" height="12" viewBox="0 0 36 36"><path d="M2 3h32v24H23l-5 6-5-6H2z" /></svg></Notify>
      <Edge />
    </Tray>
  </Taskbar>
);

export default function App() {
  return (
    <Shell>
      <Global />
      <Title />
      <RibbonBar />
      <Work>
        <ModelBrowser />
        <Stage />
      </Work>
      <Status>
        For Help, press F1
        <Count $first>1</Count>
        <Count>2</Count>
      </Status>
      <TaskbarRow />
    </Shell>
  );
}
